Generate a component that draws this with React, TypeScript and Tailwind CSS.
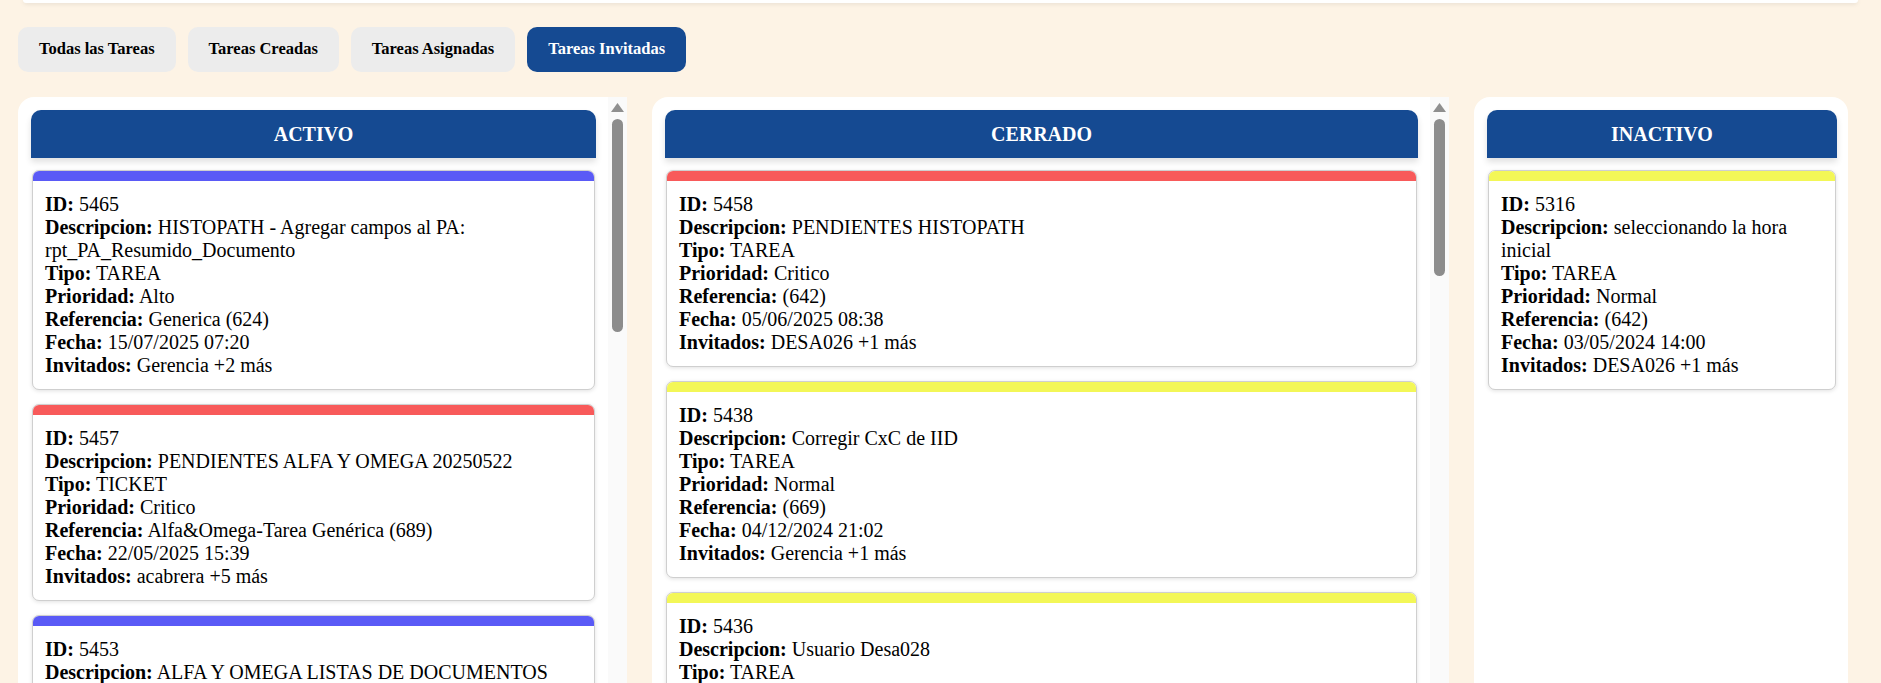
import React from "react";

type Task = {
  id: number;
  desc: string;
  tipo: string;
  prioridad: string;
  ref: string;
  fecha: string;
  invitados: string;
  bar: "blue" | "red" | "yellow";
};

const BAR = {
  blue: "bg-[#5a5af6]",
  red: "bg-[#f85a5a]",
  yellow: "bg-[#f3f757]",
};

const ACTIVO: Task[] = [
  { id: 5465, desc: "HISTOPATH - Agregar campos al PA: rpt_PA_Resumido_Documento", tipo: "TAREA", prioridad: "Alto", ref: "Generica (624)", fecha: "15/07/2025 07:20", invitados: "Gerencia +2 más", bar: "blue" },
  { id: 5457, desc: "PENDIENTES ALFA Y OMEGA 20250522", tipo: "TICKET", prioridad: "Critico", ref: "Alfa&Omega-Tarea Genérica (689)", fecha: "22/05/2025 15:39", invitados: "acabrera +5 más", bar: "red" },
  { id: 5453, desc: "ALFA Y OMEGA LISTAS DE DOCUMENTOS", tipo: "TAREA", prioridad: "Alto", ref: "Alfa&Omega-Tarea Genérica (689)", fecha: "20/05/2025 10:12", invitados: "acabrera +3 más", bar: "blue" },
];

const CERRADO: Task[] = [
  { id: 5458, desc: "PENDIENTES HISTOPATH", tipo: "TAREA", prioridad: "Critico", ref: "(642)", fecha: "05/06/2025 08:38", invitados: "DESA026 +1 más", bar: "red" },
  { id: 5438, desc: "Corregir CxC de IID", tipo: "TAREA", prioridad: "Normal", ref: "(669)", fecha: "04/12/2024 21:02", invitados: "Gerencia +1 más", bar: "yellow" },
  { id: 5436, desc: "Usuario Desa028", tipo: "TAREA", prioridad: "Normal", ref: "(642)", fecha: "02/12/2024 09:15", invitados: "DESA026 +1 más", bar: "yellow" },
];

const INACTIVO: Task[] = [
  { id: 5316, desc: "seleccionando la hora inicial", tipo: "TAREA", prioridad: "Normal", ref: "(642)", fecha: "03/05/2024 14:00", invitados: "DESA026 +1 más", bar: "yellow" },
];

const TABS = ["Todas las Tareas", "Tareas Creadas", "Tareas Asignadas", "Tareas Invitadas"];

function Card({ t }: { t: Task }) {
  return (
    <div className="mx-px bg-white border border-[#cfcfcf] rounded-[7px] overflow-hidden shadow-[0_1px_4px_rgba(0,0,0,0.12)]">
      <div className={`h-[10px] ${BAR[t.bar]}`} />
      <div className="px-3 py-3 text-[20px] leading-[23px] text-black">
        <div><b>ID:</b> {t.id}</div>
        <div><b>Descripcion:</b> {t.desc}</div>
        <div><b>Tipo:</b> {t.tipo}</div>
        <div><b>Prioridad:</b> {t.prioridad}</div>
        <div><b>Referencia:</b> {t.ref}</div>
        <div><b>Fecha:</b> {t.fecha}</div>
        <div><b>Invitados:</b> {t.invitados}</div>
      </div>
    </div>
  );
}

function Scrollbar({ thumb }: { thumb: string }) {
  return (
    <div className="w-[19px] shrink-0 bg-[#fafafa] flex flex-col items-center pt-[6px]">
      <svg width="13" height="9" viewBox="0 0 13 9">
        <path d="M6.5 0 L13 9 L0 9 Z" fill="#8f8f8f" />
      </svg>
      <div className={`mt-[7px] w-[11px] rounded-full bg-[#8c8c8c] ${thumb}`} />
    </div>
  );
}

function Column({ title, tasks, thumb }: { title: string; tasks: Task[]; thumb?: string }) {
  return (
    <div className={`bg-white flex min-h-0 overflow-hidden ${thumb ? "rounded-tl-2xl" : "rounded-t-2xl"}`}>
      <div className={`flex-1 pl-[13px] pt-[13px] ${thumb ? "pr-3" : "pr-[11px]"}`}>
        <div className="h-[48px] rounded-t-[10px] bg-[#154a92] text-white font-bold text-[20px] flex items-center justify-center shadow-[0_4px_6px_rgba(0,0,0,0.12)]">
          {title}
        </div>
        <div className="mt-3 flex flex-col gap-[14px]">
          {tasks.map((t) => <Card key={t.id} t={t} />)}
        </div>
      </div>
      {thumb && <Scrollbar thumb={thumb} />}
    </div>
  );
}

export default function App() {
  return (
    <div className="h-screen overflow-hidden bg-[#fdf3e5] font-['Liberation_Serif',serif] text-black flex flex-col">
      <div className="mx-[23px] h-[3px] bg-white rounded-b-xl shadow-[0_1px_4px_rgba(0,0,0,0.1)] shrink-0" />

      <div className="flex gap-3 pl-[18px] mt-[24px] shrink-0">
        {TABS.map((tab, i) => (
          <button
            key={tab}
            className={`h-[45px] px-[21px] rounded-[10px] text-[16.5px] font-bold ${i === 3 ? "bg-[#154a92] text-white" : "bg-[#ececec] text-black"}`}
          >
            {tab}
          </button>
        ))}
      </div>

      <div className="grid grid-cols-[609px_797px_374px] gap-[25px] pl-[18px] mt-[25px] flex-1 min-h-0">
        <Column title="ACTIVO" tasks={ACTIVO} thumb="h-[213px]" />
        <Column title="CERRADO" tasks={CERRADO} thumb="h-[157px]" />
        <Column title="INACTIVO" tasks={INACTIVO} />
      </div>
    </div>
  );
}
